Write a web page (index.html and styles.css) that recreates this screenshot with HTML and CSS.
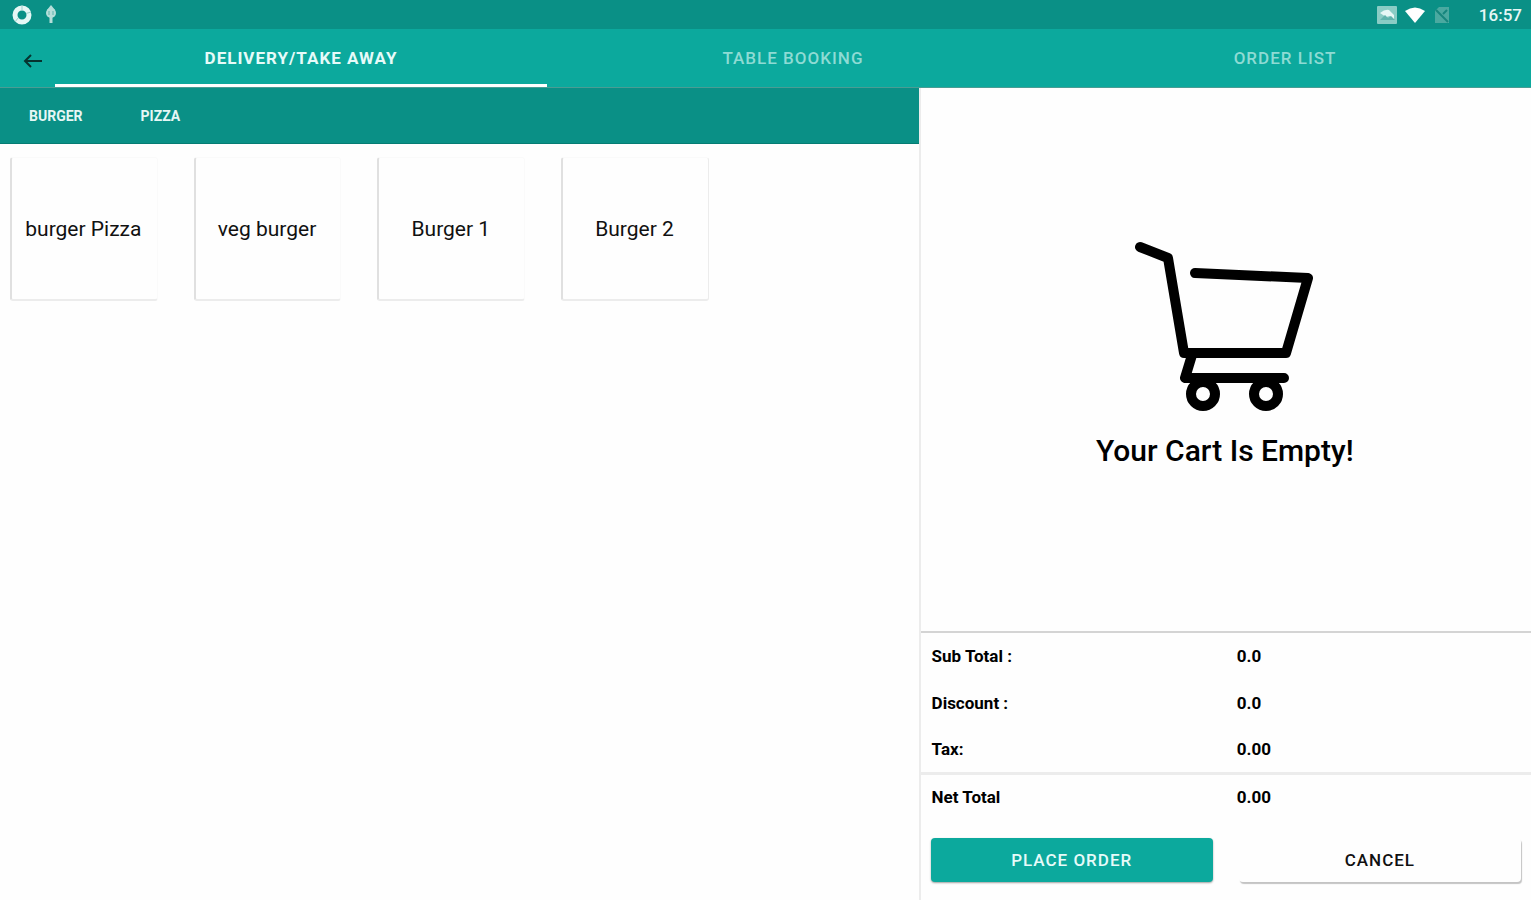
FILE: index.html
```html
<!DOCTYPE html>
<html lang="en">
<head>
    <meta charset="UTF-8">
    <meta name="viewport" content="width=device-width, initial-scale=1.0">
    <title>Delivery/Take Away</title>
    <link rel="stylesheet" href="styles.css">
</head>
<body>

<div class="statusbar">
    <div class="status-icons">
        <svg width="22" height="22" viewBox="0 0 22 22">
            <circle cx="11" cy="11" r="7" fill="none" stroke="#e6f7f5" stroke-width="5"/>
            <path d="M11 1.5v5M20 8l-5 1.5M4 18l3-4" stroke="#9ad0cb" stroke-width="1"/>
        </svg>
        <svg width="14" height="20" viewBox="0 0 14 20">
            <path d="M7 4v14" stroke="#b5ded9" stroke-width="3"/>
            <path d="M7 0l4 5H3z" fill="#b5ded9"/>
            <circle cx="7" cy="8" r="5" fill="#b5ded9"/>
            <path d="M5 6v4M9 6v4" stroke="#5fb3ac" stroke-width="1"/>
        </svg>
    </div>
    <div class="status-icons">
        <svg width="20" height="18" viewBox="0 0 20 18">
            <rect width="20" height="18" rx="1" fill="#8accc5"/>
            <path d="M3 7q5-4 9-3l5 5v5l-4-4-4 1z" fill="#e6f7f5"/>
            <path d="M3 14l5-5 3 3 3-2 4 4z" fill="#5fb3ac"/>
        </svg>
        <svg width="20" height="16" viewBox="0 0 20 16">
            <path d="M0 4q10-7 20 0L10 16z" fill="#fff"/>
        </svg>
        <svg class="sim" width="14" height="16" viewBox="0 0 14 16">
            <path d="M4 0h10v16H0V4z" fill="#4aa9a0"/>
            <path d="M1 3l12 12M8 7l4-4" stroke="#16857d" stroke-width="2"/>
        </svg>
        <span class="time">16:57</span>
    </div>
</div>

<header class="header">
    <button class="back" aria-label="Back">
        <svg width="20" height="14" viewBox="0 0 20 14">
            <path d="M19 7H2M8 1L2 7l6 6" fill="none" stroke="#06332f" stroke-width="2"/>
        </svg>
    </button>
    <nav class="tabs">
        <a class="tab active" href="#delivery">DELIVERY/TAKE AWAY</a>
        <a class="tab" href="#booking">TABLE BOOKING</a>
        <a class="tab" href="#orders">ORDER LIST</a>
    </nav>
</header>

<main class="main">
    <section class="menu">
        <nav class="categories">
            <a href="#burger">BURGER</a>
            <a href="#pizza">PIZZA</a>
        </nav>
        <div class="items">
            <button class="item">burger Pizza</button>
            <button class="item">veg burger</button>
            <button class="item">Burger 1</button>
            <button class="item last">Burger 2</button>
        </div>
    </section>

    <section class="cart">
        <div class="empty">
            <svg width="182" height="172" viewBox="0 0 182 172" fill="none" stroke="#000" stroke-width="10" stroke-linecap="round" stroke-linejoin="round">
                <path d="M6 6l28 11 16 95h102l22-75-113-5"/>
                <path d="M58 114l-7 23h99"/>
                <circle cx="69" cy="153" r="12"/>
                <circle cx="132" cy="153" r="12"/>
            </svg>
            <h1>Your Cart Is Empty!</h1>
        </div>
        <table class="totals">
            <tr><th scope="row">Sub Total :</th><td>0.0</td></tr>
            <tr><th scope="row">Discount :</th><td>0.0</td></tr>
            <tr><th scope="row">Tax:</th><td>0.00</td></tr>
            <tr class="net"><th scope="row">Net Total</th><td>0.00</td></tr>
        </table>
        <div class="actions">
            <button class="btn place">PLACE ORDER</button>
            <button class="btn cancel">CANCEL</button>
        </div>
    </section>
</main>

</body>
</html>
```
FILE: styles.css
```css
* {
    box-sizing: border-box;
}
body {
    margin: 0;
    min-height: 100vh;
    display: flex;
    flex-direction: column;
    background: #fefefe;
    color: #000;
    font-family: Roboto, Arial, sans-serif;
}
button {
    font-family: inherit;
    cursor: pointer;
}
a {
    text-decoration: none;
}

/* status bar */
.statusbar {
    display: flex;
    justify-content: space-between;
    height: 29px;
    padding: 0 9px 0 11px;
    background: #0a9086;
}
.status-icons {
    display: flex;
    align-items: center;
    gap: 8px;
}
.status-icons:first-child {
    gap: 11px;
}
.sim {
    margin-left: 2px;
}
.time {
    margin-left: 22px;
    color: #e6f7f5;
    font-size: 17px;
    font-weight: 500;
}

/* top tabs */
.header {
    display: flex;
    height: 59px;
    background: #0ca99d;
    border-bottom: 1px solid #4a9d94;
}
.back {
    width: 55px;
    padding: 8px 0 0 10px;
    border: none;
    background: none;
}
.tabs {
    flex: 1;
    display: grid;
    grid-template-columns: repeat(3, 1fr);
}
.tab {
    display: flex;
    align-items: center;
    justify-content: center;
    border-top: 3px solid transparent;
    border-bottom: 3px solid transparent;
    color: #8edbd4;
    font-size: 17px;
    font-weight: 500;
    letter-spacing: 1px;
}
.active {
    color: #e6fbf9;
    border-bottom-color: #fff;
    font-weight: 700;
}

.main {
    flex: 1;
    display: grid;
    grid-template-columns: 3fr 2fr;
}

/* left side */
.categories {
    display: flex;
    align-items: center;
    gap: 58px;
    height: 56px;
    padding: 0 29px;
    background: #0a9086;
    border-bottom: 1px solid #067c73;
}
.categories a {
    color: #e6f7f5;
    font-size: 14px;
    font-weight: 700;
}
.items {
    display: grid;
    grid-template-columns: repeat(5, 1fr);
    padding-top: 13px;
}
.item {
    height: 144px;
    margin: 0 26px 0 10px;
    padding: 0 2px 0 0;
    border: 1px solid #fafafa;
    border-left: 2px solid #e0e0e0;
    border-bottom: 2px solid #ececec;
    border-radius: 3px;
    background: #fefefe;
    color: #111;
    font-size: 21px;
}
.last {
    border-right-color: #ececec;
}

/* cart */
.cart {
    display: flex;
    flex-direction: column;
    border-left: 2px solid #ececec;
}
.empty {
    flex: 1;
    display: flex;
    flex-direction: column;
    align-items: center;
    justify-content: center;
    gap: 20px;
    padding: 0 2px 10px 0;
}
.empty h1 {
    margin: 0;
    font-size: 30px;
    font-weight: 500;
    line-height: 36px;
}
.totals {
    width: 100%;
    border-collapse: collapse;
    table-layout: fixed;
    border-top: 2px solid #d4d4d4;
}
.totals th, .totals td {
    height: 47px;
    padding: 0 11px;
    text-align: left;
    font-size: 17px;
    font-weight: 700;
}
.net {
    border-top: 3px solid #ececec;
}
.actions {
    display: grid;
    grid-template-columns: 1fr 1fr;
    gap: 26px;
    padding: 18px 10px;
}
.btn {
    height: 44px;
    border: none;
    border-radius: 4px;
    font-size: 17px;
    font-weight: 500;
    letter-spacing: 1px;
}
.place {
    background: #0ca99d;
    color: #e6fbf9;
    box-shadow: 0 1px 2px #a0a0a0;
}
.cancel {
    background: #fefefe;
    color: #111;
    box-shadow: 1px 2px 1px #c4c4c4;
}
```
